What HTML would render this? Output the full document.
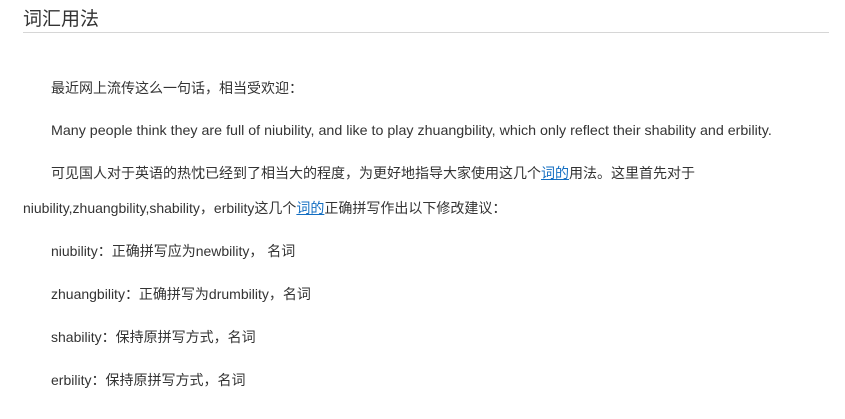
<!DOCTYPE html>
<html><head><meta charset="utf-8"><style>
body{margin:0;width:845px;height:419px;background:#fff;font-family:"Liberation Sans","Noto Sans CJK SC",sans-serif;color:#333;position:relative;overflow:hidden}
.t{position:absolute;left:23px;top:8px;font-size:19px;line-height:24px;color:#333}
.hr{position:absolute;left:23px;top:32px;width:806px;height:1px;background:#d6d6d6}
.l{position:absolute;white-space:nowrap;font-size:14px;line-height:20px}
a{color:#136ec2;text-decoration:underline}
</style></head><body>
<div class="t">词汇用法</div>
<div class="hr"></div>
<div class="l" style="left:51px;top:78px">最近网上流传这么一句话，相当受欢迎：</div>
<div class="l" style="left:51px;top:121px;font-size:14.25px">Many people think they are full of niubility, and like to play zhuangbility, which only reflect their shability and erbility.</div>
<div class="l" style="left:51px;top:163px">可见国人对于英语的热忱已经到了相当大的程度，为更好地指导大家使用这几个<a>词的</a>用法。这里首先对于</div>
<div class="l" style="left:23px;top:198px">niubility,zhuangbility,shability，erbility这几个<a>词的</a>正确拼写作出以下修改建议：</div>
<div class="l" style="left:51px;top:241px">niubility：正确拼写应为newbility， 名词</div>
<div class="l" style="left:51px;top:284px">zhuangbility：正确拼写为drumbility，名词</div>
<div class="l" style="left:51px;top:327px">shability：保持原拼写方式，名词</div>
<div class="l" style="left:51px;top:370px">erbility：保持原拼写方式，名词</div>
</body></html>
